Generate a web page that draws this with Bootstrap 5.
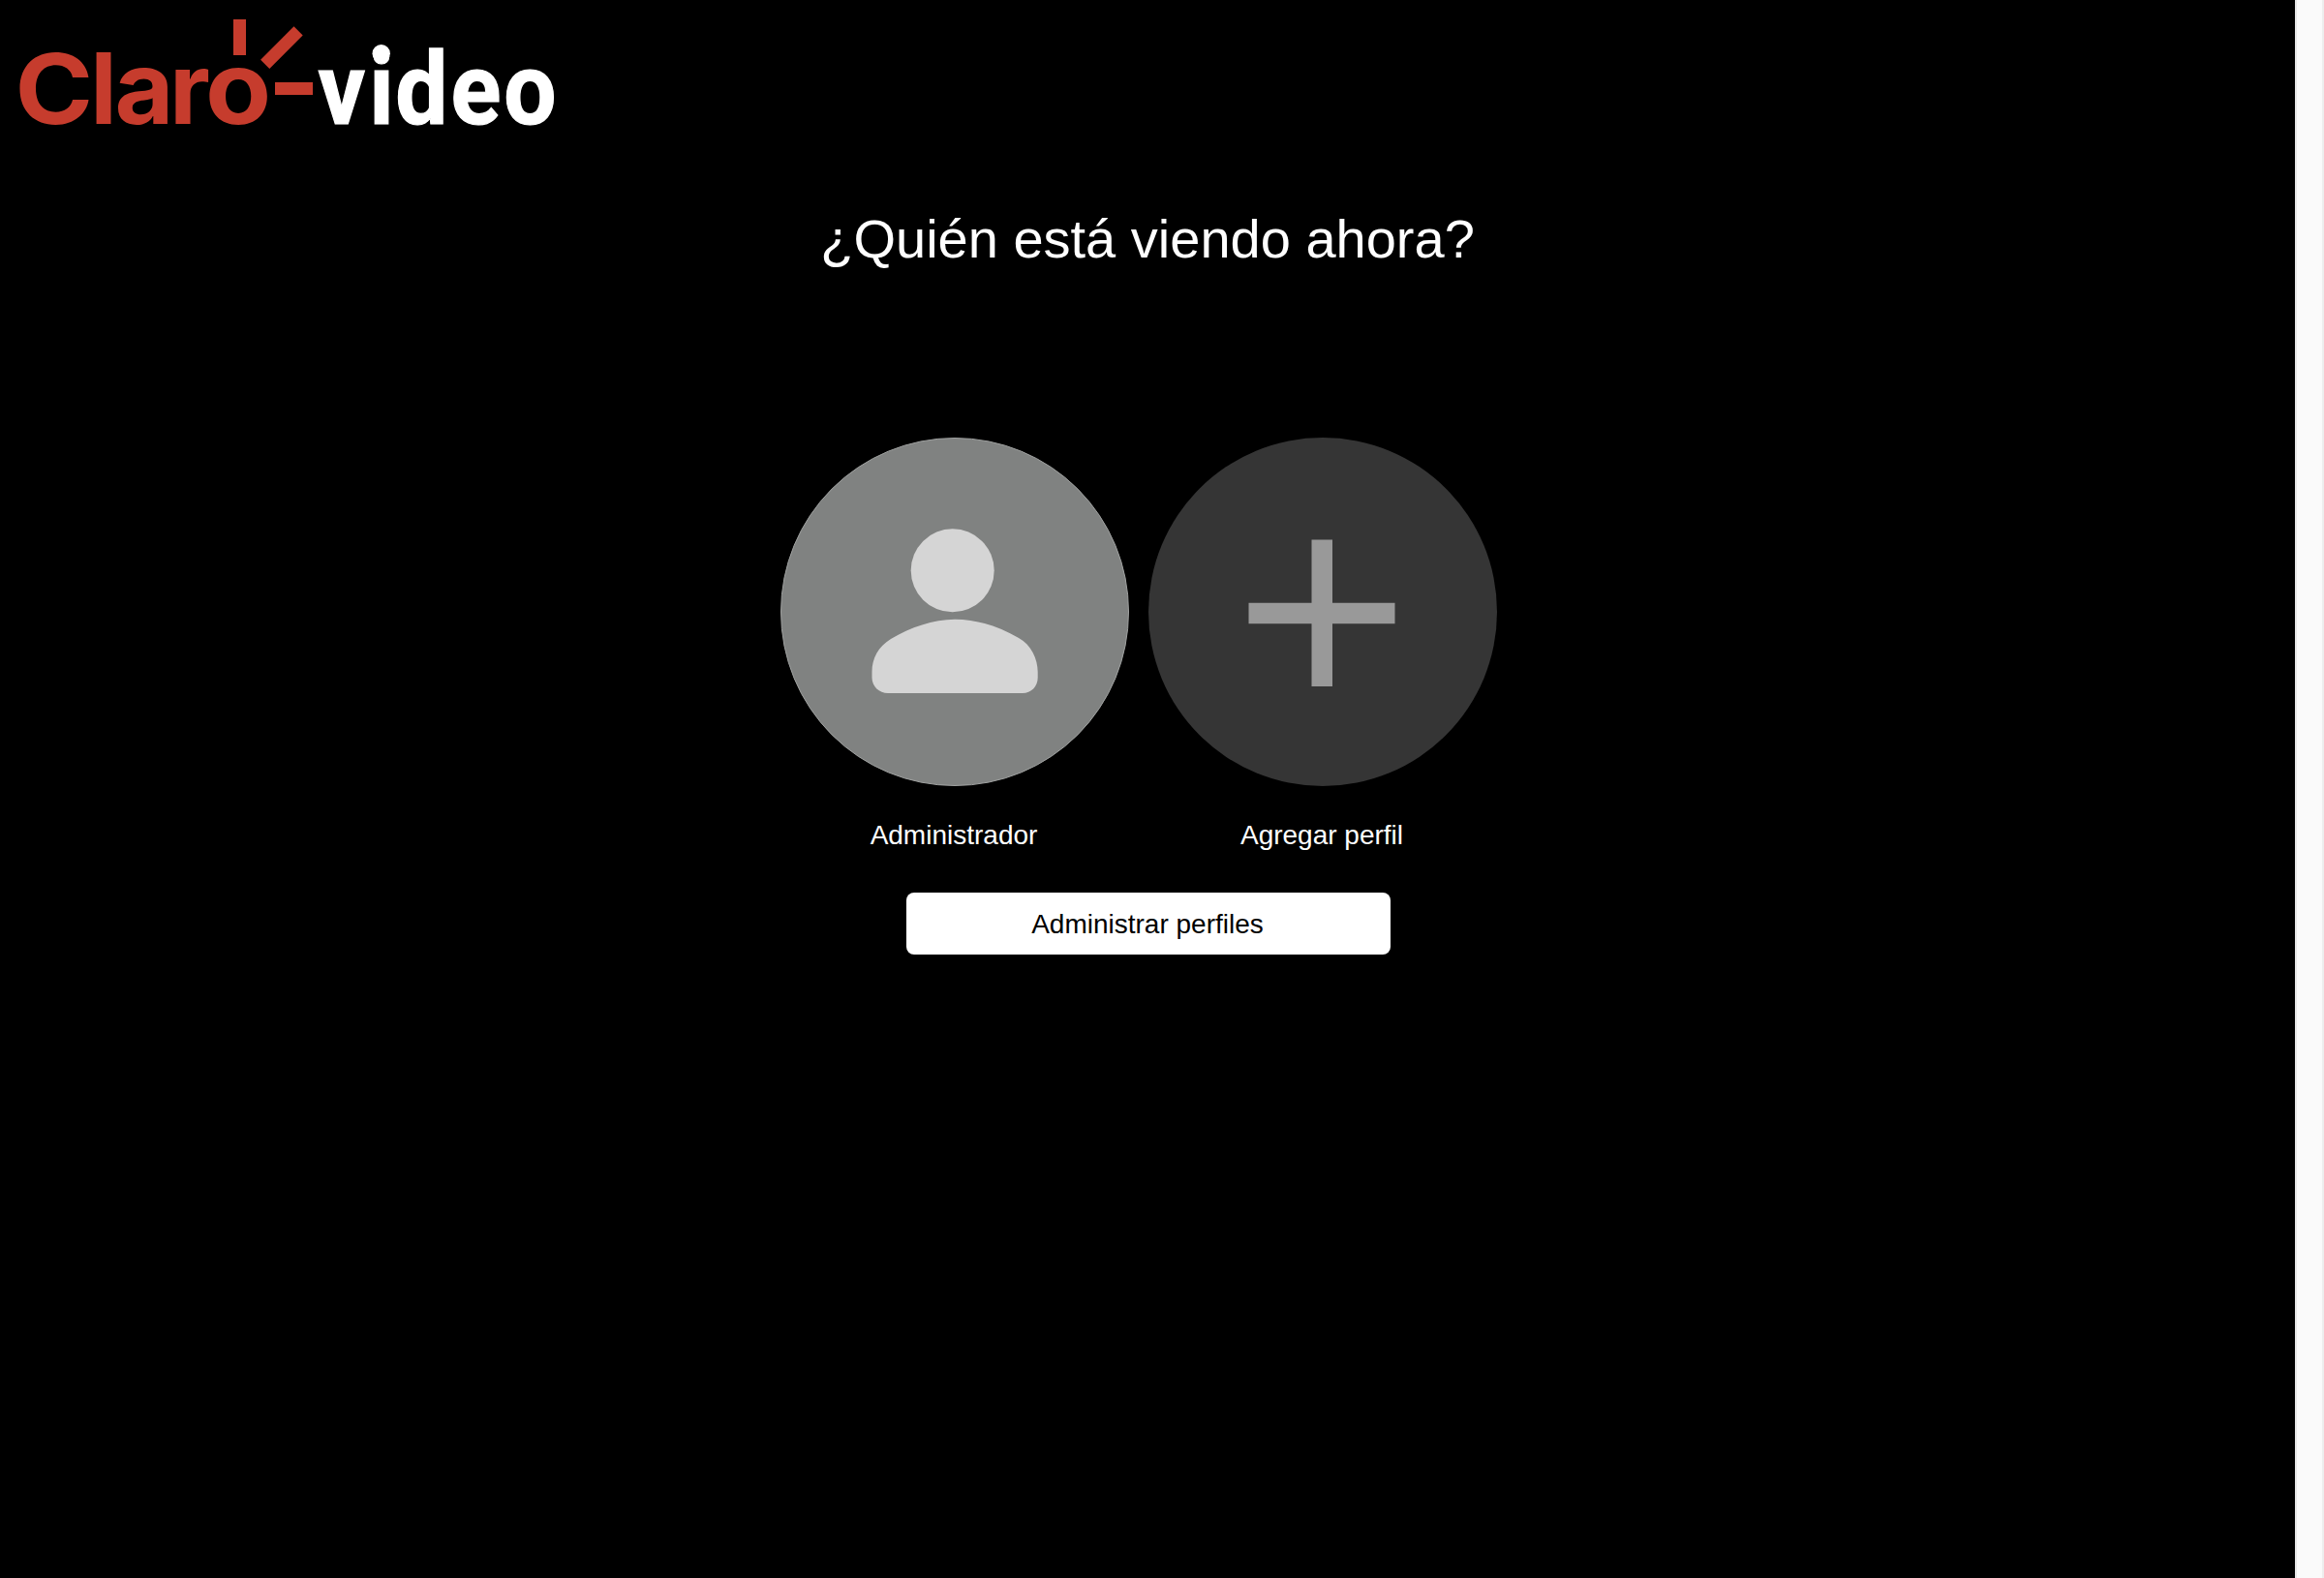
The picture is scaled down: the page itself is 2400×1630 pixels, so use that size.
<!DOCTYPE html>
<html lang="es">
<head>
<meta charset="utf-8">
<meta name="viewport" content="width=device-width, initial-scale=1">
<title>Claro video - Perfiles</title>
<link href="https://cdn.jsdelivr.net/npm/bootstrap@5.3.0/dist/css/bootstrap.min.css" rel="stylesheet">
<style>
  body { background: #000; font-family: "Liberation Sans", Arial, sans-serif; height: 1630px; }
  .scroll-track { width: 30px; background: #fafafa; border-left: 2px solid #e8e8e8; border-right: 2px solid #ededed; }
  .brand-logo { width: 600px; height: 170px; overflow: visible; }
  .brand-red { font-family: Inter, "Liberation Sans", sans-serif; font-weight: 700; }
  .brand-white { font-family: Roboto, "Liberation Sans", sans-serif; font-weight: 700; stroke: #fff; stroke-width: 1.2px; }
  .page-title { font-size: 56px; line-height: 64px; margin-top: 45px; font-weight: 400; }
  .profile-list { gap: 20px; margin-top: 173px; padding-right: 18px; }
  .profile-item { width: 360px; }
  .avatar { width: 360px; height: 360px; }
  .profile-name { font-size: 28px; line-height: 32px; margin-top: 35px; padding-right: 2px; }
  .btn-manage { width: 500px; height: 64px; margin: 43px 0 0 2px; padding: 2px 2px 0 0; border: 0; border-radius: 8px; font-size: 28px; line-height: 32px; color: #000; }
</style>
</head>
<body class="d-flex overflow-hidden text-white">
  <main class="flex-grow-1 d-flex flex-column">
    <header class="d-flex">
      <a href="#" class="d-block" aria-label="Claro video">
        <svg class="brand-logo d-block" viewBox="0 0 600 170">
          <g fill="#c63c2d">
            <text class="brand-red" transform="translate(15.500 128) scale(1.090 1)" font-size="100">C</text>
            <text class="brand-red" y="128.300" font-size="101.500"><tspan x="93.300">l</tspan><tspan x="118.500" font-size="105">a</tspan><tspan x="175" font-size="103">r</tspan></text>
            <text class="brand-red" transform="translate(212 128) scale(1.060 1)" font-size="105">o</text>
            <path d="M241 20h13v37h-13zM303.500 27.300l9.200 9.200-34.400 34.400-9.200-9.200zM284 85h39v13h-39z"/>
          </g>
          <g fill="#fff">
            <text class="brand-white" transform="translate(328.500 127.800) scale(.925 1)" font-size="104" dx="0 4.500 1.500 3.500 3">video</text>
            <circle cx="393.700" cy="55.300" r="9.200"/>
          </g>
        </svg>
      </a>
    </header>
    <section class="d-flex flex-column align-items-center">
      <h1 class="page-title mb-0">¿Quién está viendo ahora?</h1>
      <div class="profile-list d-flex">
        <div class="profile-item text-center">
          <svg class="avatar d-block" viewBox="0 0 360 360">
            <circle cx="180" cy="180" r="179.500" fill="#808281" stroke="#a0a2a1"/>
            <circle cx="177.700" cy="137.300" r="43" fill="#d5d5d5"/>
            <path d="M180 187.700C203 187.700 225 195 246 207C259 214 265.700 229 265.700 242V248C265.700 257 259 264 250 264H111C102 264 94.500 257 94.500 248V242C94.500 228 101 216 114 208C134 196 158 187.700 180 187.700Z" fill="#d5d5d5"/>
          </svg>
          <div class="profile-name">Administrador</div>
        </div>
        <div class="profile-item text-center">
          <svg class="avatar d-block" viewBox="0 0 360 360">
            <circle cx="180" cy="180" r="180" fill="#353535"/>
            <path d="M168.500 105.500H190V170.700H254.500V192.300H190V257H168.500V192.300H103.500V170.700H168.500Z" fill="#999"/>
          </svg>
          <div class="profile-name">Agregar perfil</div>
        </div>
      </div>
      <button type="button" class="btn btn-light bg-white btn-manage">Administrar perfiles</button>
    </section>
  </main>
  <aside class="scroll-track flex-shrink-0"></aside>
<script src="https://cdn.jsdelivr.net/npm/bootstrap@5.3.0/dist/js/bootstrap.bundle.min.js"></script>
</body>
</html>
